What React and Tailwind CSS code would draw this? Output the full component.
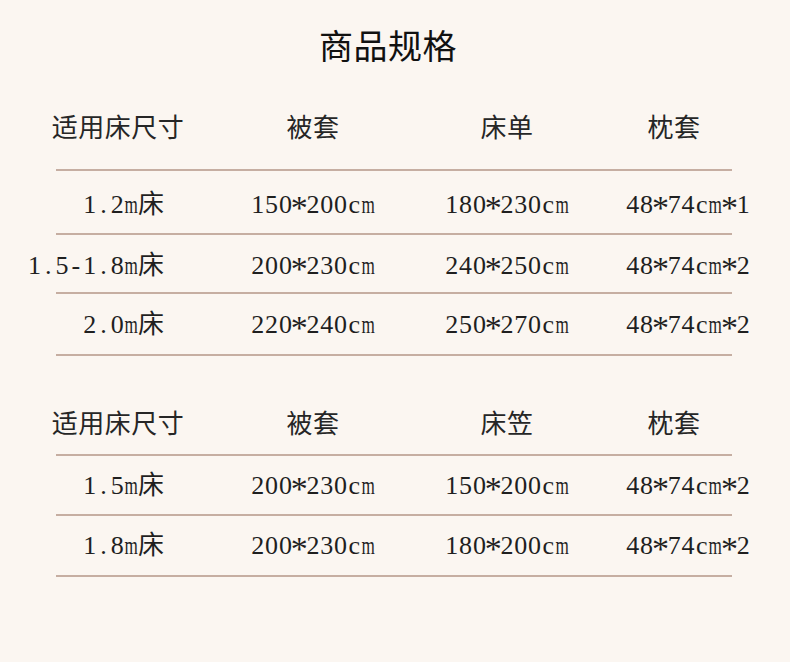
import React from "react";

const FONT = { fontFamily: '"Liberation Serif", "Noto Sans CJK SC", serif' };

function Num({ text }) {
  return (
    <span className="whitespace-nowrap inline-flex items-baseline">
      {[...text].map((ch, i) => {
        if (ch === "*") {
          return (
            <span key={i} className="inline-flex w-[13.8px] justify-center">
              <span className="inline-block text-[34px] leading-none translate-y-[6px]">*</span>
            </span>
          );
        }
        if (ch === "m") {
          return (
            <span key={i} className="inline-flex w-[13.8px] justify-center overflow-visible">
              <span className="inline-block shrink-0 scale-x-[0.66]">m</span>
            </span>
          );
        }
        if (ch.charCodeAt(0) < 128) {
          return (
            <span key={i} className="inline-flex w-[13.8px] justify-center">
              {ch}
            </span>
          );
        }
        return <span key={i}>{ch}</span>;
      })}
    </span>
  );
}

function Line() {
  return <div className="ml-[56px] w-[676px] h-[2px] bg-[#c6aea2]" />;
}

function HeaderRow({ cols, className }) {
  return (
    <div className={"grid grid-cols-[236px_154px_234px_128px] items-center text-[26px] text-[#262626] " + className}>
      <div className="text-center tracking-[0.5px]">{cols[0]}</div>
      <div className="text-center tracking-[0.5px]">{cols[1]}</div>
      <div className="text-center tracking-[0.5px]">{cols[2]}</div>
      <div className="text-center tracking-[0.5px] pr-[28px]">{cols[3]}</div>
    </div>
  );
}

function DataRow({ cols, className }) {
  return (
    <div className={"grid grid-cols-[236px_154px_234px_128px] items-center text-[26px] text-[#1f1f1f] " + className}>
      <div className="flex justify-end pr-[72px]">
        <Num text={cols[0]} />
      </div>
      <div className="flex justify-center">
        <Num text={cols[1]} />
      </div>
      <div className="flex justify-center">
        <Num text={cols[2]} />
      </div>
      <div className="flex justify-center">
        <Num text={cols[3]} />
      </div>
    </div>
  );
}

export default function App() {
  return (
    <div className="w-[790px] h-[662px] bg-[#fbf6f1] overflow-hidden" style={FONT}>
      <div className="h-[94px] flex items-center justify-center pr-[14px] text-[34px] text-[#111] tracking-[0.5px]">
        商品规格
      </div>
      <HeaderRow cols={["适用床尺寸", "被套", "床单", "枕套"]} className="h-[75px] pb-[7px]" />
      <Line />
      <DataRow cols={["1.2m床", "150*200cm", "180*230cm", "48*74cm*1"]} className="h-[62px] pt-[4px]" />
      <Line />
      <DataRow cols={["1.5-1.8m床", "200*230cm", "240*250cm", "48*74cm*2"]} className="h-[57px] pt-[3px]" />
      <Line />
      <DataRow cols={["2.0m床", "220*240cm", "250*270cm", "48*74cm*2"]} className="h-[60px]" />
      <Line />
      <HeaderRow cols={["适用床尺寸", "被套", "床笠", "枕套"]} className="h-[98px] pt-[38px]" />
      <Line />
      <DataRow cols={["1.5m床", "200*230cm", "150*200cm", "48*74cm*2"]} className="h-[58px]" />
      <Line />
      <DataRow cols={["1.8m床", "200*230cm", "180*200cm", "48*74cm*2"]} className="h-[59px]" />
      <Line />
    </div>
  );
}
